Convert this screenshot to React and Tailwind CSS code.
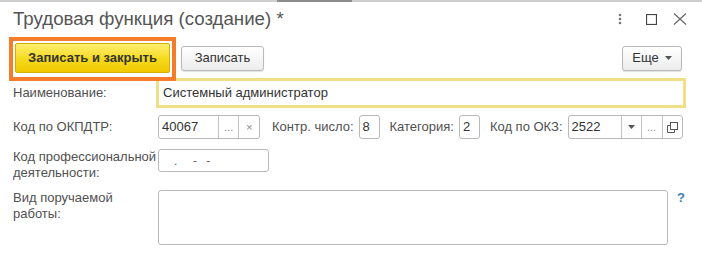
import React from 'react';

const font = { fontFamily: '"Liberation Sans", Arial, sans-serif' };

const segWidth = { 20: 'w-[20px]', 21: 'w-[21px]' };

const Seg = ({ w, children }) => (
  <div className={`flex h-full ${segWidth[w]} items-center justify-center border-l border-[#c2c2c2] text-[11px] text-[#8a8a8a]`}>
    {children}
  </div>
);

const Tri = () => (
  <svg width="7" height="4" viewBox="0 0 7 4">
    <path d="M0 0h7L3.5 4z" fill="#555" />
  </svg>
);

const Label = ({ children, w = 'w-[145px]' }) => (
  <div className={`${w} shrink-0 text-[13px] leading-4 text-[#505050]`}>{children}</div>
);

const App = () => {
  return (
    <div className="relative h-[257px] w-[702px] overflow-hidden bg-white" style={font}>
      {/* frame strip at the very top */}
      <div className="flex h-[2px] bg-[#cfcfcf]">
        <div className="ml-[277px] h-[2px] w-[75px] bg-[#8c8c8c]" />
      </div>

      {/* title */}
      <div className="mt-[6px] flex h-[22px] items-center justify-between pl-[13px] pr-[15px]">
        <h1 className="text-[18.7px] leading-[22px] text-[#555]">Трудовая функция (создание) *</h1>
        <div className="flex items-center">
          <svg width="4" height="12" viewBox="0 0 4 12" className="mr-[24px]">
            <circle cx="2" cy="2" r="1.3" fill="#777" />
            <circle cx="2" cy="6" r="1.3" fill="#777" />
            <circle cx="2" cy="10" r="1.3" fill="#777" />
          </svg>
          <svg width="11" height="11" viewBox="0 0 11 11" className="mr-[16px]">
            <rect x="0.5" y="0.5" width="10" height="10" fill="none" stroke="#444" strokeWidth="1.2" />
          </svg>
          <svg width="14" height="12" viewBox="0 0 14 12">
            <path d="M1 0.5L13 11.5M13 0.5L1 11.5" stroke="#666" strokeWidth="1.1" />
          </svg>
        </div>
      </div>

      {/* command bar */}
      <div className="mt-[13px] flex h-[30px] items-center pl-[15px] pr-[20px]">
        <button className="flex h-[30px] w-[155px] items-center justify-center rounded-[2px] border border-[#d4ae00] bg-gradient-to-b from-[#fdee6a] via-[#f7dc1c] to-[#f0c800] text-[13px] font-bold text-[#333]">
          Записать и закрыть
        </button>
        <button className="ml-[11px] flex h-[25px] w-[83px] items-center justify-center rounded-[3px] border border-[#b9b9b9] bg-gradient-to-b from-white to-[#ececec] text-[13px] text-[#333] shadow-[0_1px_1px_rgba(0,0,0,0.12)]">
          Записать
        </button>
        <button className="ml-auto flex h-[25px] w-[60px] items-center justify-center gap-[6px] rounded-[3px] border border-[#b9b9b9] bg-gradient-to-b from-white to-[#ececec] text-[13px] text-[#333] shadow-[0_1px_1px_rgba(0,0,0,0.12)]">
          Еще <Tri />
        </button>
      </div>

      {/* Наименование */}
      <div className="mt-[5px] flex items-center pl-[13px]">
        <Label w="w-[143px]">Наименование:</Label>
        <div className="flex h-[30px] w-[530px] items-center border-[3px] border-[#f1df88] pl-[4px] text-[13px] text-[#333]">
          Системный администратор
        </div>
      </div>

      {/* codes row */}
      <div className="mt-[7px] flex h-[24px] items-center pl-[13px] text-[13px] text-[#505050]">
        <Label>Код по ОКПДТР:</Label>
        <div className="flex h-[24px] w-[102px] items-stretch rounded-[3px] border border-[#b9b9b9]">
          <div className="flex w-[60px] items-center pl-[3px] text-[#333]">40067</div>
          <Seg w={21}>...</Seg>
          <Seg w={21}>×</Seg>
        </div>
        <span className="ml-[12px]">Контр. число:</span>
        <div className="ml-[5px] flex h-[24px] w-[21px] items-center rounded-[3px] border border-[#b9b9b9] pl-[3px] text-[#333]">8</div>
        <span className="ml-[10px]">Категория:</span>
        <div className="ml-[5px] flex h-[24px] w-[21px] items-center rounded-[3px] border border-[#b9b9b9] pl-[3px] text-[#333]">2</div>
        <span className="ml-[10px]">Код по ОКЗ:</span>
        <div className="ml-[5px] flex h-[24px] w-[115px] items-stretch rounded-[3px] border border-[#b9b9b9]">
          <div className="flex w-[52px] items-center pl-[3px] text-[#333]">2522</div>
          <Seg w={20}>
            <Tri />
          </Seg>
          <Seg w={21}>...</Seg>
          <div className="flex flex-1 items-center justify-center border-l border-[#c2c2c2]">
            <svg width="11" height="11" viewBox="0 0 11 11">
              <path d="M0.5 3.5h3M0.5 3.5v7h7v-3" fill="none" stroke="#555" />
              <rect x="3.5" y="0.5" width="7" height="7" fill="none" stroke="#555" />
            </svg>
          </div>
        </div>
      </div>

      {/* Код профессиональной деятельности */}
      <div className="mt-[10px] flex items-start pl-[13px]">
        <Label>
          Код профессиональной
          <br />
          деятельности:
        </Label>
        <div className="flex h-[23px] w-[111px] items-center rounded-[3px] border border-[#b9b9b9] pl-[15px] text-[12px] tracking-[3px] text-[#666]">
          .&nbsp;&nbsp;- -
        </div>
      </div>

      {/* Вид поручаемой работы */}
      <div className="mt-[9px] flex items-start pl-[13px]">
        <Label>
          Вид поручаемой
          <br />
          работы:
        </Label>
        <div className="h-[55px] w-[510px] rounded-[3px] border border-[#b9b9b9]" />
        <span className="ml-[9px] text-[13px] font-bold leading-4 text-[#3d7fb8]">?</span>
      </div>

      {/* highlight annotation around the default button */}
      <div className="pointer-events-none absolute left-[9px] top-[37px] h-[44px] w-[167px] border-[4px] border-[#f47c2b]" />
    </div>
  );
};

export default App;
